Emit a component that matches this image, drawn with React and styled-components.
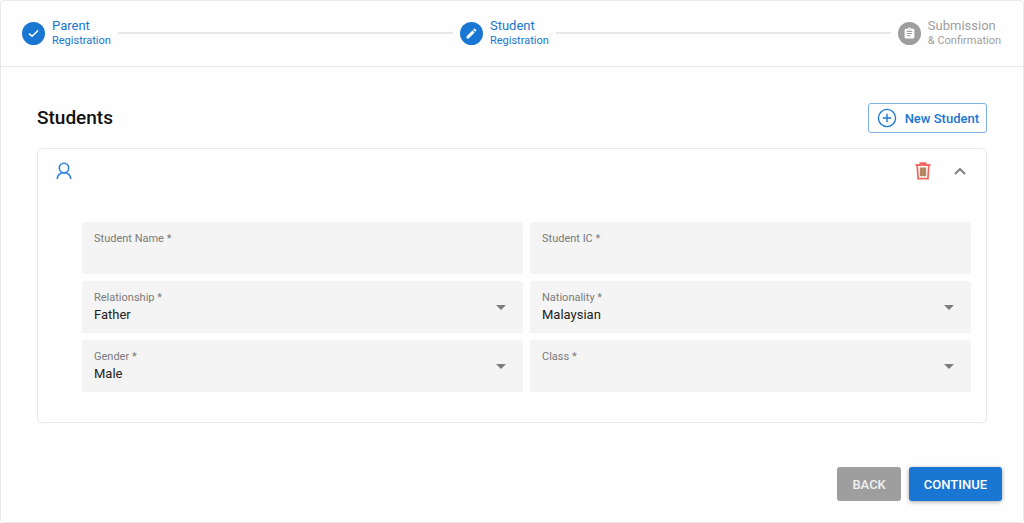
import React, {Fragment, useState} from 'react';
import styled, {createGlobalStyle, css} from 'styled-components';

const steps = [
  {title: 'Parent', subtitle: 'Registration', icon: 'check', active: true},
  {title: 'Student', subtitle: 'Registration', icon: 'pencil', active: true},
  {title: 'Submission', subtitle: '& Confirmation', icon: 'clipboard', active: false},
];

const fields = [
  {id: 'name', label: 'Student Name *'},
  {id: 'ic', label: 'Student IC *'},
  {id: 'relationship', label: 'Relationship *', options: ['Father', 'Mother', 'Guardian']},
  {id: 'nationality', label: 'Nationality *', options: ['Malaysian', 'Other']},
  {id: 'gender', label: 'Gender *', options: ['Male', 'Female']},
  {id: 'class', label: 'Class *', options: ['']},
];

const StepIcon = ({name}) => (
  <svg width="13" height="13" viewBox="0 0 24 24" fill="currentColor" aria-hidden="true">
    {name === 'check' && (
      <path d="M4 12.200 9.300 17.200 20.500 6.500" fill="none" stroke="currentColor" strokeWidth="2.800" />
    )}
    {name === 'pencil' && (
      <path d="M3 17.25V21h3.75L17.81 9.94l-3.75-3.75L3 17.25zM20.71 7.04a1 1 0 0 0 0-1.41l-2.34-2.34a1 1 0 0 0-1.41 0l-1.83 1.83 3.75 3.75 1.83-1.83z" />
    )}
    {name === 'clipboard' && (
      <path d="M19 3h-4.18C14.4 1.84 13.3 1 12 1s-2.4.84-2.82 2H5c-1.1 0-2 .9-2 2v14c0 1.1.9 2 2 2h14c1.1 0 2-.9 2-2V5c0-1.1-.9-2-2-2zm-7 0c.55 0 1 .45 1 1s-.45 1-1 1-1-.45-1-1 .45-1 1-1zm2 14H7v-2h7v2zm3-4H7v-2h10v2zm0-4H7V7h10v2z" />
    )}
  </svg>
);

const PlusIcon = () => (
  <svg width="20" height="20" viewBox="0 0 20 20" fill="none" stroke="currentColor" aria-hidden="true">
    <circle cx="10" cy="10" r="8.6" strokeWidth="1.3" />
    <path d="M10 5.8v8.4M5.8 10h8.4" strokeWidth="1.4" />
  </svg>
);

const UserIcon = () => (
  <svg width="16" height="18" viewBox="0 0 16 18" fill="none" stroke="#2b83dc" strokeWidth="1.6" aria-hidden="true">
    <circle cx="8" cy="6" r="4.700" />
    <path d="M1.200 17c.3-4 2.800-6.300 6.800-6.300s6.500 2.300 6.800 6.300" />
  </svg>
);

const TrashIcon = () => (
  <svg width="16" height="18" viewBox="0 0 16 18" fill="none" aria-hidden="true">
    <path d="M5.400 2.500V1.200h5.200v1.300" stroke="#f0655c" strokeWidth="1.800" />
    <path d="M.5 3h15" stroke="#f0655c" strokeWidth="1.900" />
    <path d="M2.200 3.500 3.100 16.600h9.800L13.800 3.500" stroke="#f0655c" strokeWidth="1.700" />
    <path d="M4.800 5.500h6.400v8.700H4.800z" fill="#b98a66" />
    <path d="M6.500 5.500v8.700M9.500 5.500v8.700" stroke="#a5825c" strokeWidth=".8" />
  </svg>
);

const ChevronIcon = ({open}) => (
  <svg width="12" height="8" viewBox="0 0 12 8" fill="none" stroke="#7b7b7b" strokeWidth="1.800" aria-hidden="true">
    <path d={open ? 'M1 7l5-5 5 5' : 'M1 1l5 5 5-5'} />
  </svg>
);

const Field = ({id, label, options}) => (
  <FieldBox>
    <FieldLabel htmlFor={id}>{label}</FieldLabel>
    {options ? (
      <>
        <FieldSelect id={id} defaultValue={options[0]}>
          {options.map(option => (
            <option key={option}>{option}</option>
          ))}
        </FieldSelect>
        <Arrow viewBox="0 0 10 5" aria-hidden="true">
          <path d="M0 0h10L5 5z" fill="#7d7d7d" />
        </Arrow>
      </>
    ) : (
      <FieldInput id={id} type="text" />
    )}
  </FieldBox>
);

const App = () => {
  const [open, setOpen] = useState(true);

  return (
    <>
      <GlobalStyle />
      <Page>
        <Stepper>
          {steps.map((step, index) => (
            <Fragment key={step.title}>
              {index > 0 && <Connector />}
              <Step $active={step.active}>
                <StepCircle $active={step.active}>
                  <StepIcon name={step.icon} />
                </StepCircle>
                <div>
                  <StepTitle>{step.title}</StepTitle>
                  <StepSubtitle>{step.subtitle}</StepSubtitle>
                </div>
              </Step>
            </Fragment>
          ))}
        </Stepper>

        <Content>
          <TitleRow>
            <Title>Students</Title>
            <NewButton type="button">
              <PlusIcon />
              New Student
            </NewButton>
          </TitleRow>

          <Panel>
            <PanelHeader>
              <UserIcon />
              <PanelActions>
                <IconButton type="button" aria-label="Delete student">
                  <TrashIcon />
                </IconButton>
                <IconButton type="button" aria-label="Toggle student" onClick={() => setOpen(!open)}>
                  <ChevronIcon open={open} />
                </IconButton>
              </PanelActions>
            </PanelHeader>
            {open && (
              <FieldGrid>
                {fields.map(field => (
                  <Field key={field.id} {...field} />
                ))}
              </FieldGrid>
            )}
          </Panel>
        </Content>

        <Footer>
          <Button type="button">BACK</Button>
          <Button type="button" $primary>
            CONTINUE
          </Button>
        </Footer>
      </Page>
    </>
  );
};

const GlobalStyle = createGlobalStyle`
  * {
    box-sizing: border-box;
  }

  body {
    margin: 0;
    background: #fefefe;
    font-family: Roboto, 'Liberation Sans', sans-serif;
  }

  button,
  input,
  select {
    font-family: inherit;
  }
`;

const Page = styled.main`
  border: 1px solid #e8e8e8;
  border-radius: 4px;
`;

const Stepper = styled.header`
  display: flex;
  align-items: center;
  gap: 7px;
  padding: 17px 22px 18px 21px;
  border-bottom: 1px solid #e8e8e8;
`;

const Step = styled.div`
  display: flex;
  align-items: center;
  gap: 7px;
  white-space: nowrap;
  color: ${({$active}) => ($active ? '#1976d2' : '#9e9e9e')};
`;

const StepCircle = styled.span`
  display: flex;
  align-items: center;
  justify-content: center;
  width: 23px;
  height: 23px;
  border-radius: 50%;
  color: #fff;
  background: ${({$active}) => ($active ? '#1976d2' : '#9e9e9e')};
`;

const StepTitle = styled.div`
  font-size: 13px;
  line-height: 15px;
`;

const StepSubtitle = styled.div`
  font-size: 11px;
  line-height: 15px;
`;

const Connector = styled.div`
  flex: 1;
  height: 2px;
  background: #e8e8e8;
`;

const Content = styled.section`
  padding: 36px 36px 0;
`;

const TitleRow = styled.div`
  display: flex;
  align-items: center;
  justify-content: space-between;
  margin-bottom: 15px;
`;

const Title = styled.h1`
  margin: 0;
  font-size: 19px;
  font-weight: 500;
  line-height: 24px;
  color: #111;
`;

const NewButton = styled.button`
  display: flex;
  align-items: center;
  gap: 8px;
  height: 30px;
  padding: 0 7px 0 8px;
  border: 1px solid #7fb0e6;
  border-radius: 3px;
  background: transparent;
  color: #1976d2;
  font-size: 13px;
  font-weight: 500;
  cursor: pointer;
`;

const Panel = styled.div`
  border: 1px solid #e8e8e8;
  border-radius: 4px;
`;

const PanelHeader = styled.div`
  display: flex;
  align-items: center;
  justify-content: space-between;
  height: 44px;
  padding: 0 20px 0 18px;
`;

const PanelActions = styled.div`
  display: flex;
  align-items: center;
  gap: 23px;
`;

const IconButton = styled.button`
  display: flex;
  padding: 0;
  border: 0;
  background: none;
  cursor: pointer;
`;

const FieldGrid = styled.div`
  display: grid;
  grid-template-columns: 1fr 1fr;
  gap: 7px;
  padding: 29px 15px 30px 44px;
`;

const FieldBox = styled.div`
  position: relative;
  height: 52px;
  padding-top: 9px;
  border-radius: 4px 4px 0 0;
  background: #f4f4f4;
`;

const FieldLabel = styled.label`
  display: block;
  padding: 0 12px;
  font-size: 11px;
  line-height: 16px;
  color: #7a7a7a;
`;

const control = css`
  display: block;
  width: 100%;
  height: 18px;
  padding: 0 12px;
  border: 0;
  outline: 0;
  background: transparent;
  font-size: 13px;
  line-height: 18px;
  color: #212121;
`;

const FieldInput = styled.input`
  ${control}
`;

const FieldSelect = styled.select`
  ${control}
  appearance: none;
`;

const Arrow = styled.svg`
  position: absolute;
  top: 24px;
  right: 17px;
  width: 10px;
  height: 5px;
  pointer-events: none;
`;

const Footer = styled.footer`
  display: flex;
  justify-content: flex-end;
  gap: 8px;
  padding: 44px 21px 21px;
`;

const Button = styled.button`
  height: 34px;
  padding: 0 15px;
  border: 0;
  border-radius: 3px;
  background: ${({$primary}) => ($primary ? '#1976d2' : '#9e9e9e')};
  box-shadow: ${({$primary}) => ($primary ? '0 1px 4px rgba(0, 0, 0, 0.35)' : 'none')};
  color: ${({$primary}) => ($primary ? '#fff' : '#f1f1f1')};
  font-size: 13px;
  font-weight: 500;
  cursor: pointer;
`;

export default App;
